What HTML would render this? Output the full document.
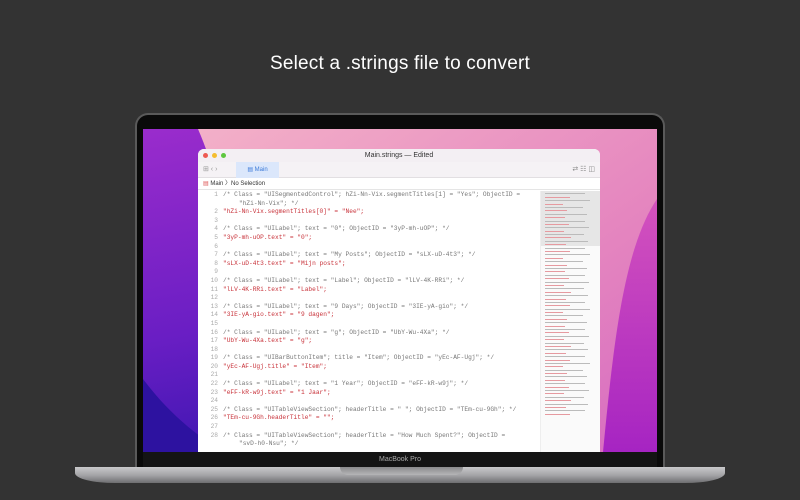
<!DOCTYPE html>
<html><head><meta charset="utf-8"><style>
*{margin:0;padding:0;box-sizing:border-box}
html,body{width:800px;height:500px;overflow:hidden}
body{background:#333333;position:relative;font-family:"Liberation Sans",sans-serif}
.title{position:absolute;top:53px;left:0;width:800px;text-align:center;color:#fff;font-size:19px;letter-spacing:0.2px}
.bezel{position:absolute;left:135px;top:113px;width:530px;height:354px;background:#0a0a0a;border:2px solid #5a5a5a;border-bottom:none;border-radius:13px 13px 0 0}
.screen{position:absolute;left:143px;top:129px;width:514px;height:323px;overflow:hidden}
.chin{position:absolute;left:143px;top:452px;width:514px;height:15px;background:#141414;color:#aaa;font-size:7px;text-align:center;line-height:15px}
.base{position:absolute;left:75px;top:467px;width:650px;height:16px;border-radius:0 0 40px 40px/0 0 10px 10px;background:linear-gradient(180deg,#c9c9cb,#a5a5a8 50%,#6e6e70)}
.notch{position:absolute;left:340px;top:467px;width:123px;height:8px;border-radius:0 0 8px 8px;background:linear-gradient(180deg,#8a8a8c,#b5b5b7)}
.win{position:absolute;left:55px;top:20px;width:402px;height:303px;background:#fff;border-radius:6px 6px 0 0;overflow:hidden}
.tb{height:13px;background:#f3eff3;position:relative;font-size:7px;color:#333;text-align:center;line-height:13px}
.dot{position:absolute;top:4px;width:5px;height:5px;border-radius:50%}
.tool{height:16px;background:#f5f2f5;border-bottom:1px solid #e2dfe2;position:relative}
.tab{position:absolute;left:38px;top:0;width:43px;height:16px;background:#dbe7fb;color:#3c7ad8;font-size:6px;line-height:16px;text-align:center}
.bc{height:12px;border-bottom:1px solid #e5e5e5;font-size:6px;line-height:12px;padding-left:5px;color:#333}
.code{position:absolute;left:0;top:42px;width:340px;font-family:"Liberation Mono",monospace;font-size:6.2px;line-height:8.6px;color:#777;white-space:nowrap}
.ln{display:inline-block;width:20px;text-align:right;color:#aaa;margin-right:5px}
.r{color:#c8323a}
.w{padding-left:41px}
.mini{position:absolute;left:342px;top:42px;width:60px;height:261px;background:#fafafa;border-left:1px solid #eee}
.mini i{display:block;height:1px;margin:2.4px 4px;background:#e69aa0}
.mini i.g{background:#bbb}
</style></head><body>
<div class="title">Select a .strings file to convert</div>
<div class="bezel"></div>
<div class="screen">
<svg width="514" height="323" style="position:absolute;left:0;top:0">
<defs>
<linearGradient id="p" x1="0" y1="0" x2="0.3" y2="1"><stop offset="0" stop-color="#9a2ccc"/><stop offset="0.6" stop-color="#6a1ec4"/><stop offset="1" stop-color="#3b16b0"/></linearGradient>
<linearGradient id="k" x1="0" y1="0" x2="1" y2="1"><stop offset="0" stop-color="#f3b0c8"/><stop offset="0.6" stop-color="#e586bf"/><stop offset="1" stop-color="#d66cc0"/></linearGradient>
<linearGradient id="m" x1="0" y1="0" x2="0" y2="1"><stop offset="0" stop-color="#d452bd"/><stop offset="1" stop-color="#a624c2"/></linearGradient>
</defs>
<rect width="514" height="323" fill="url(#p)"/>
<path d="M55 0 L514 0 L514 323 L120 323 C100 200 90 80 55 0Z" fill="url(#k)"/>
<path d="M514 70 C480 120 470 220 460 323 L514 323Z" fill="url(#m)"/>
<path d="M0 250 C30 290 60 310 80 323 L0 323Z" fill="#2d12a0"/>
</svg>
<div class="win">
<div class="tb"><span class="dot" style="left:5px;background:#ee5a52"></span><span class="dot" style="left:14px;background:#f5bd2f"></span><span class="dot" style="left:23px;background:#5ec73f"></span>Main.strings — Edited</div>
<div class="tool"><span style="position:absolute;left:5px;top:3px;font-size:7px;color:#999">⊞ ‹ ›</span><div class="tab">▤ Main</div><span style="position:absolute;right:5px;top:3px;font-size:7px;color:#888">⇄ ☷ ◫</span></div>
<div class="bc"><span style="color:#d55">▤</span> Main 〉No Selection</div>
<div class="code">
<div><span class="ln">1</span>/* Class = "UISegmentedControl"; hZi-Nn-Vix.segmentTitles[1] = "Yes"; ObjectID =</div>
<div class="w">"hZi-Nn-Vix"; */</div>
<div><span class="ln">2</span><span class="r">"hZi-Nn-Vix.segmentTitles[0]" = "Nee";</span></div>
<div><span class="ln">3</span></div>
<div><span class="ln">4</span>/* Class = "UILabel"; text = "0"; ObjectID = "3yP-mh-uOP"; */</div>
<div><span class="ln">5</span><span class="r">"3yP-mh-uOP.text" = "0";</span></div>
<div><span class="ln">6</span></div>
<div><span class="ln">7</span>/* Class = "UILabel"; text = "My Posts"; ObjectID = "sLX-uD-4t3"; */</div>
<div><span class="ln">8</span><span class="r">"sLX-uD-4t3.text" = "Mijn posts";</span></div>
<div><span class="ln">9</span></div>
<div><span class="ln">10</span>/* Class = "UILabel"; text = "Label"; ObjectID = "lLV-4K-RRi"; */</div>
<div><span class="ln">11</span><span class="r">"lLV-4K-RRi.text" = "Label";</span></div>
<div><span class="ln">12</span></div>
<div><span class="ln">13</span>/* Class = "UILabel"; text = "9 Days"; ObjectID = "3IE-yA-gio"; */</div>
<div><span class="ln">14</span><span class="r">"3IE-yA-gio.text" = "9 dagen";</span></div>
<div><span class="ln">15</span></div>
<div><span class="ln">16</span>/* Class = "UILabel"; text = "g"; ObjectID = "UbY-Wu-4Xa"; */</div>
<div><span class="ln">17</span><span class="r">"UbY-Wu-4Xa.text" = "g";</span></div>
<div><span class="ln">18</span></div>
<div><span class="ln">19</span>/* Class = "UIBarButtonItem"; title = "Item"; ObjectID = "yEc-AF-Ugj"; */</div>
<div><span class="ln">20</span><span class="r">"yEc-AF-Ugj.title" = "Item";</span></div>
<div><span class="ln">21</span></div>
<div><span class="ln">22</span>/* Class = "UILabel"; text = "1 Year"; ObjectID = "eFF-kR-w9j"; */</div>
<div><span class="ln">23</span><span class="r">"eFF-kR-w9j.text" = "1 Jaar";</span></div>
<div><span class="ln">24</span></div>
<div><span class="ln">25</span>/* Class = "UITableViewSection"; headerTitle = " "; ObjectID = "TEm-cu-9Gh"; */</div>
<div><span class="ln">26</span><span class="r">"TEm-cu-9Gh.headerTitle" = "";</span></div>
<div><span class="ln">27</span></div>
<div><span class="ln">28</span>/* Class = "UITableViewSection"; headerTitle = "How Much Spent?"; ObjectID =</div>
<div class="w">"svD-h0-Nsu"; */</div>
</div>
<div class="mini">
<div style="position:absolute;left:0;top:0;width:60px;height:55px;background:#e6e6e6"></div>
<div style="position:relative">
<i class="g" style="width:40px"></i><i style="width:25px"></i><i style="width:45px" class="g"></i><i style="width:18px"></i><i class="g" style="width:38px"></i><i style="width:22px"></i><i class="g" style="width:42px"></i><i style="width:20px"></i><i class="g" style="width:40px"></i><i style="width:24px"></i><i class="g" style="width:44px"></i><i style="width:19px"></i><i class="g" style="width:39px"></i><i style="width:26px"></i><i class="g" style="width:43px"></i><i style="width:21px"></i><i class="g" style="width:40px"></i><i style="width:25px"></i><i class="g" style="width:45px"></i><i style="width:18px"></i><i class="g" style="width:38px"></i><i style="width:22px"></i><i class="g" style="width:42px"></i><i style="width:20px"></i><i class="g" style="width:40px"></i><i style="width:24px"></i><i class="g" style="width:44px"></i><i style="width:19px"></i><i class="g" style="width:39px"></i><i style="width:26px"></i><i class="g" style="width:43px"></i><i style="width:21px"></i><i class="g" style="width:40px"></i><i style="width:25px"></i><i class="g" style="width:45px"></i><i style="width:18px"></i><i class="g" style="width:38px"></i><i style="width:22px"></i><i class="g" style="width:42px"></i><i style="width:20px"></i><i class="g" style="width:40px"></i><i style="width:24px"></i><i class="g" style="width:44px"></i><i style="width:19px"></i><i class="g" style="width:39px"></i><i style="width:26px"></i><i class="g" style="width:43px"></i><i style="width:21px"></i><i class="g" style="width:40px"></i><i style="width:25px"></i><i class="g" style="width:45px"></i><i style="width:18px"></i><i class="g" style="width:38px"></i><i style="width:22px"></i><i class="g" style="width:42px"></i><i style="width:20px"></i><i class="g" style="width:40px"></i><i style="width:24px"></i><i class="g" style="width:44px"></i><i style="width:19px"></i><i class="g" style="width:39px"></i><i style="width:26px"></i><i class="g" style="width:43px"></i><i style="width:21px"></i><i class="g" style="width:40px"></i><i style="width:25px"></i>
</div></div>
</div>
</div>
<div class="chin">MacBook Pro</div>
<div class="base"></div>
<div class="notch"></div>
</body></html>
